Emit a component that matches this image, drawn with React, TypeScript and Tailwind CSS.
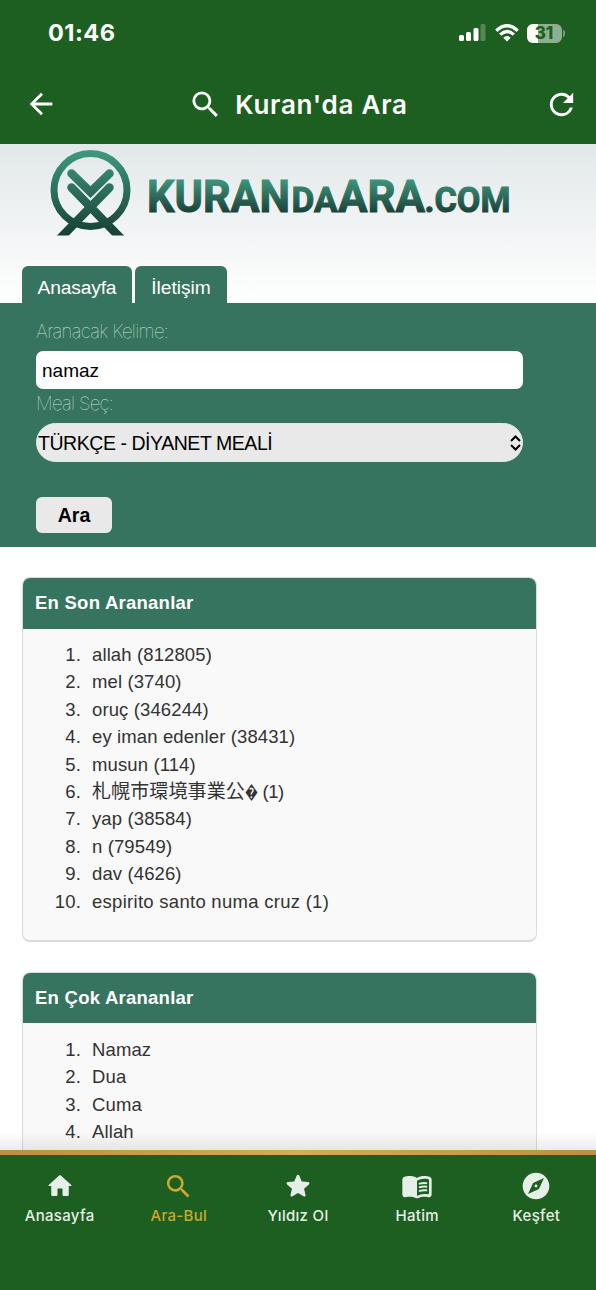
import React from 'react'
import { MdArrowBack, MdExplore, MdRefresh, MdSearch } from "react-icons/md";

const recent = [
  "allah (812805)",
  "mel (3740)",
  "oruç (346244)",
  "ey iman edenler (38431)",
  "musun (114)",
  <>
    <span className="text-[19px]">札幌市環境事業公</span>
    <span className="inline-block w-[13px] origin-left scale-x-70">{"\uFFFD"}</span><span className="tracking-[-0.500px]"> (1)</span>
  </>,
  "yap (38584)",
  "n (79549)",
  "dav (4626)",
  "espirito santo numa cruz (1)",
]

const popular = ["Namaz", "Dua", "Cuma", "Allah"]

const HomeIcon = () => (
  <svg viewBox="0 0 24 24" className="size-[30px]" fill="currentColor">
    <path d="M10 19v-5h4v5c0 .55.45 1 1 1h3c.55 0 1-.45 1-1v-7h1.7c.46 0 .68-.57.33-.87L12.67 3.6c-.38-.34-.96-.34-1.34 0l-8.36 7.53c-.34.3-.13.87.33.87H5v7c0 .55.45 1 1 1h3c.55 0 1-.45 1-1z" />
  </svg>
)

const StarIcon = () => (
  <svg viewBox="0 0 24 24" className="size-[32px]" fill="currentColor">
    <path d="M12 17.27l4.15 2.51c.76.46 1.69-.22 1.49-1.08l-1.1-4.72 3.67-3.18c.67-.58.31-1.68-.57-1.75l-4.83-.41-1.89-4.46c-.34-.81-1.5-.81-1.84 0L9.19 8.63l-4.83.41c-.88.07-1.24 1.17-.57 1.75l3.67 3.18-1.1 4.72c-.2.86.73 1.54 1.49 1.08l4.15-2.5z" />
  </svg>
)

const BookIcon = () => (
  <svg viewBox="0 0 24 24" className="size-[32px]" fill="currentColor">
    <path d="M17.5 4.5c-1.95 0-4.05.4-5.5 1.5-1.45-1.1-3.55-1.5-5.5-1.5-1.45 0-2.99.22-4.28.79C1.49 5.62 1 6.33 1 7.14v11.28c0 1.3 1.22 2.26 2.48 1.94.98-.25 2.02-.36 3.02-.36 1.56 0 3.22.26 4.56.92.6.3 1.28.3 1.87 0 1.34-.67 3-.92 4.56-.92 1 0 2.04.11 3.02.36 1.26.33 2.48-.63 2.48-1.94V7.14c0-.81-.49-1.52-1.22-1.85-1.28-.57-2.82-.79-4.27-.79zM21 17.23c0 .63-.58 1.09-1.2.98-.75-.14-1.53-.2-2.3-.2-1.7 0-4.15.65-5.5 1.5V8c1.35-.85 3.8-1.5 5.5-1.5.92 0 1.83.09 2.7.28.46.1.8.51.8.98v9.47z" />
    <path d="M14 10.25q2.3-.7 5-.4M14 12.95q2.3-.7 5-.4M14 15.65q2.3-.7 5-.4" fill="none" stroke="currentColor" strokeWidth="1.5" strokeLinecap="round" />
  </svg>
)

const Logo = () => (
  <svg viewBox="0 0 470 92" className="ml-[46px] mt-[4px] w-[470px] h-[92px] shrink-0">
    <defs>
      <linearGradient id="mark" gradientUnits="userSpaceOnUse" x1="0" y1="2" x2="0" y2="87">
        <stop offset="0" stopColor="#3f9a7f" />
        <stop offset="1" stopColor="#173f36" />
      </linearGradient>
      <linearGradient id="word" gradientUnits="userSpaceOnUse" x1="0" y1="32" x2="0" y2="64">
        <stop offset="0" stopColor="#3f947b" />
        <stop offset="1" stopColor="#1b4339" />
      </linearGradient>
      <clipPath id="feet">
        <rect x="0" y="0" width="90" height="87.500" />
      </clipPath>
    </defs>
    <g fill="none" stroke="url(#mark)" clipPath="url(#feet)">
      <circle cx="44.500" cy="42" r="36.500" strokeWidth="7" />
      <path d="M25.500 25.500L44.500 44L63.500 25.500" strokeWidth="8.500" strokeLinecap="round" />
      <path d="M25.500 39.500L76 91.500M63.500 39.500L13 91.500" strokeWidth="8.500" strokeLinecap="round" />
    </g>
    <g fill="url(#word)" stroke="url(#word)" strokeWidth="1" fontFamily="Roboto, sans-serif" fontWeight="700">
      <text x="101" y="63.500" fontSize="44.500" textLength="143" lengthAdjust="spacingAndGlyphs">KURAN</text>
      <text x="245.500" y="63.500" fontSize="35.500" textLength="46" lengthAdjust="spacingAndGlyphs">DA</text>
      <text x="292" y="63.500" fontSize="44.500" textLength="87" lengthAdjust="spacingAndGlyphs">ARA</text>
      <text x="378.500" y="63.500" fontSize="35.500" textLength="86" lengthAdjust="spacingAndGlyphs">.COM</text>
    </g>
  </svg>
)

const StatusBar = () => (
  <div className="h-[64px] pt-[2px] pl-[48px] pr-[30px] flex items-center justify-between">
    <span className="font-[Inter] font-bold text-[23.500px] tracking-[0.500px]">01:46</span>
    <div className="flex items-center">
      <svg viewBox="0 0 27 18" className="w-[27px] h-[18px] mr-[9px]" fill="currentColor">
        <rect x="0" y="11" width="5" height="6" rx="1.500" />
        <rect x="7" y="8" width="5" height="9" rx="1.500" />
        <rect x="14.500" y="4" width="5" height="13" rx="1.500" />
        <rect x="21.500" y="0" width="5" height="17" rx="1.500" opacity="0.25" />
      </svg>
      <svg viewBox="0 0 24 18" className="w-[24px] h-[18px] mr-[8px]">
        <g fill="none" stroke="currentColor" strokeWidth="3.300">
          <path d="M1.300 6.700Q12 -3.300 22.700 6.700" />
          <path d="M5.200 10.600Q12 4.200 18.800 10.600" />
        </g>
        <path d="M8.300 13.700Q12 10.500 15.700 13.700L12 17.500Z" fill="currentColor" />
      </svg>
      <div className="relative w-[35px] h-[19px] rounded-[6px] overflow-hidden bg-[#8fb090] flex items-center justify-center">
        <div className="absolute left-0 top-0 h-full w-[11px] bg-white"></div>
        <span className="relative font-[Inter] font-extrabold text-[17px] leading-none text-[#1e6020]">31</span>
      </div>
      <div className="w-[2.500px] h-[7px] ml-[1px] mr-px rounded-r-full bg-[#6f9b70]"></div>
    </div>
  </div>
)

const Card = (props: any) => {
  return (
    <div className="ml-[22px] w-[514.500px] shrink-0 rounded-[8px] border border-[#d9dbda] border-b-2 bg-[#f9f9f9] overflow-hidden">
      <h2 className="h-[50.500px] pl-[12px] flex items-center bg-[#36745f] text-white font-bold text-[18.500px] tracking-[0.250px]">{props.title}</h2>
      <ol className="pt-[12.500px] pb-[25px] text-[18.500px] leading-[27.400px] text-[#333]">
        {props.items.map((item: any, i: number) => (
          <li key={i} className="flex h-[27.400px] whitespace-pre">
            <span className="w-[58px] mr-[11px] text-right tracking-[0.200px]">{i + 1}.</span>
            <span className={i === 9 ? "tracking-[0.280px]" : "tracking-[0.120px]"}>{item}</span>
          </li>
        ))}
      </ol>
    </div>
  )
}

const Tab = (props: any) => (
  <div className={"flex flex-col items-center gap-[3px] w-[119.200px] " + (props.active ? "text-[#c9a92f]" : "text-[#e6efe7]")}>
    <div className="h-[32px] flex items-center">{props.icon}</div>
    <span className="font-[Inter] font-medium text-[15px] leading-[22px] tracking-[0.300px]">{props.label}</span>
  </div>
)

const App = () => {
  return (
    <div className="w-[596px] h-[1290px] overflow-hidden flex flex-col bg-white font-['Liberation_Sans','Noto_Sans_CJK_JP',sans-serif]">
      <header className="h-[144px] shrink-0 bg-[#1d5f20] text-white">
        <StatusBar />
        <div className="h-[80px] pl-[24px] pr-[17px] flex items-center justify-between">
          <MdArrowBack className="size-[34px]" />
          <div className="mr-[6px] flex items-center gap-[12px]">
            <MdSearch className="size-[35px]" />
            <h1 className="font-[Inter] font-semibold text-[26px] tracking-[0.750px]">Kuran'da Ara</h1>
          </div>
          <MdRefresh className="size-[35px]" />
        </div>
      </header>

      <main className="flex-1 min-h-0 overflow-hidden relative flex flex-col">
        <div className="h-[158.500px] shrink-0 flex flex-col justify-between bg-linear-to-b from-[#e2e8ea] to-white">
          <Logo />
          <div className="ml-[22px] flex gap-[3px] text-white text-[19.200px]">
            <a className="w-[110px] h-[37px] pt-[8px] flex items-center justify-center rounded-t-[6px] bg-[#36745f] tracking-[-0.150px]">Anasayfa</a>
            <a className="w-[92px] h-[37px] pt-[8px] flex items-center justify-center rounded-t-[6px] bg-[#36745f]">İletişim</a>
          </div>
        </div>

        <form className="h-[244.500px] shrink-0 pl-[36px] pt-[14.500px] bg-[#36745f] flex flex-col items-start">
          <label className="font-[Inter] font-thin text-[18.500px] leading-[28px] tracking-[-0.650px] text-[#d3e4dd]">Aranacak Kelime:</label>
          <div className="mt-[6px] w-[487px] h-[38px] pt-[3px] pl-[6px] flex items-center rounded-[7px] bg-white text-[19px] text-black">namaz</div>
          <label className="font-[Inter] font-thin text-[18.500px] leading-[28px] tracking-[-0.650px] text-[#d3e4dd]">Meal Seç:</label>
          <div className="mt-[6px] w-[487px] h-[39px] pl-px pr-px flex items-center justify-between rounded-full border border-[#d6efe5] bg-[#e9e9e9] text-[19.500px] text-black">
            <span className="pt-[2px] tracking-[-0.450px]">TÜRKÇE - DİYANET MEALİ</span>
            <svg viewBox="0 0 11 16" className="w-[11px] h-[16px]" fill="none" stroke="currentColor" strokeWidth="2">
              <path d="M1 6L5.500 1.500L10 6M1 10L5.500 14.500L10 10" />
            </svg>
          </div>
          <button type="button" className="mt-[35px] w-[76px] h-[36px] pt-px rounded-[6px] bg-[#e9e9e9] font-bold text-[19.500px] text-black">Ara</button>
        </form>

        <div className="pt-[30px] flex flex-col gap-[30px]">
          <Card title="En Son Arananlar" items={recent} />
          <Card title="En Çok Arananlar" items={popular} />
        </div>
        <div className="absolute bottom-0 left-0 w-full h-[18px] bg-linear-to-b from-transparent to-black/8"></div>
      </main>

      <nav className="h-[140px] shrink-0 bg-[#1d5f20]">
        <div className="h-[5px] bg-linear-to-r from-[#b8923f] via-[#cdb04f] to-[#b8923f]"></div>
        <div className="pt-[15px] flex">
          <Tab label="Anasayfa" icon={<HomeIcon />} />
          <Tab label="Ara-Bul" icon={<MdSearch className="size-[31px]" />} active />
          <Tab label="Yıldız Ol" icon={<StarIcon />} />
          <Tab label="Hatim" icon={<BookIcon />} />
          <Tab label="Keşfet" icon={<MdExplore className="size-[32px]" />} />
        </div>
      </nav>
    </div>
  )
}

export default App
